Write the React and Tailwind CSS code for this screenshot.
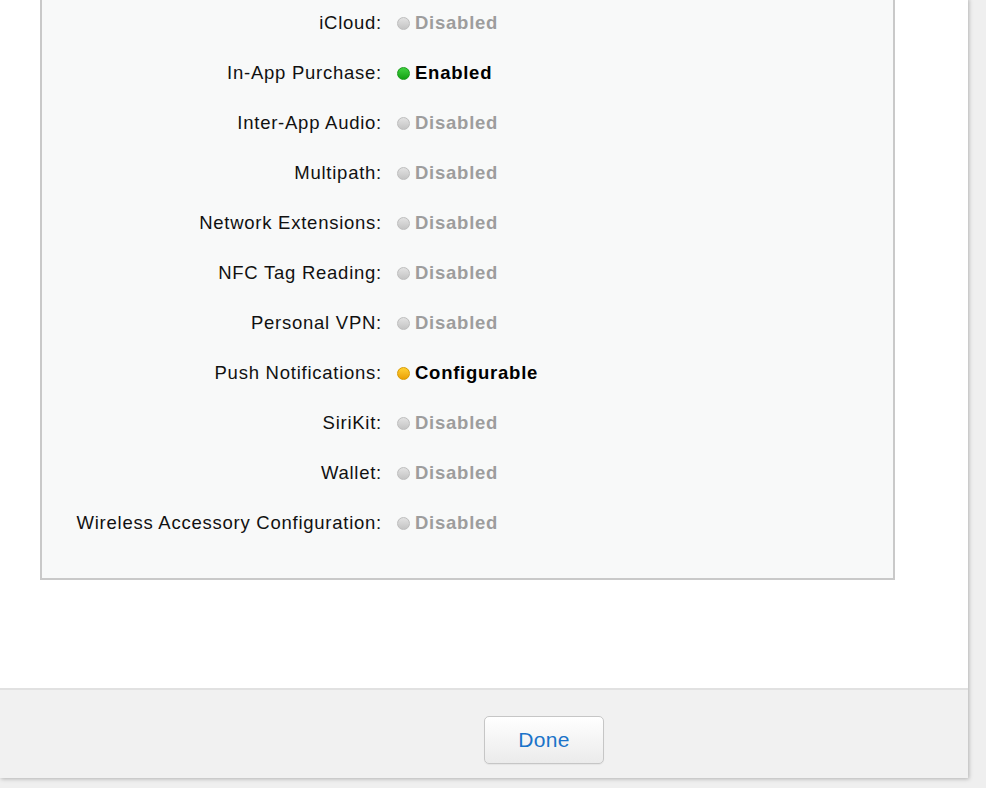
import React from "react";

const capabilities = [
  { name: "iCloud", status: "disabled" },
  { name: "In-App Purchase", status: "enabled" },
  { name: "Inter-App Audio", status: "disabled" },
  { name: "Multipath", status: "disabled" },
  { name: "Network Extensions", status: "disabled" },
  { name: "NFC Tag Reading", status: "disabled" },
  { name: "Personal VPN", status: "disabled" },
  { name: "Push Notifications", status: "configurable" },
  { name: "SiriKit", status: "disabled" },
  { name: "Wallet", status: "disabled" },
  { name: "Wireless Accessory Configuration", status: "disabled" },
];

const StatusDot = ({ status }) => {
  if (status === "enabled") {
    return (
      <span className="w-[13px] h-[13px] rounded-full bg-gradient-to-b from-[#3fd23f] to-[#10a010] border border-[#1c9a1c] shrink-0" />
    );
  }
  if (status === "configurable") {
    return (
      <span className="w-[13px] h-[13px] rounded-full bg-gradient-to-b from-[#ffd030] to-[#eaa000] border border-[#d89a00] shrink-0" />
    );
  }
  return (
    <span className="w-[13px] h-[13px] rounded-full bg-gradient-to-b from-[#e2e2e2] to-[#c4c4c4] border border-[#bdbdbd] shrink-0" />
  );
};

const StatusLabel = ({ status }) => {
  if (status === "enabled") return <span className="font-bold text-black">Enabled</span>;
  if (status === "configurable") return <span className="font-bold text-black">Configurable</span>;
  return <span className="font-bold text-[#9d9d9d]">Disabled</span>;
};

const App = () => {
  return (
    <div
      className="w-[986px] h-[788px] bg-[#efefef] overflow-hidden"
      style={{ fontFamily: '"Liberation Sans", Arial, sans-serif' }}
    >
      <div className="w-[968px] bg-white shadow-[1px_1px_4px_rgba(0,0,0,0.25)]">
        {/* Capabilities box */}
        <div className="pl-[40px] pr-[73px] h-[690px]">
          <div className="bg-[#f8f9f9] border-x-2 border-b-2 border-[#c9c9c9] pb-[30px]">
            <div className="-mt-[2px]">
              {capabilities.map((cap) => (
                <div key={cap.name} className="flex items-center h-[50px] text-[18.5px] tracking-[0.75px]">
                  <div className="w-[340px] text-right text-[#111]">{cap.name}:</div>
                  <div className="flex items-center ml-[15px] gap-[5px]">
                    <StatusDot status={cap.status} />
                    <StatusLabel status={cap.status} />
                  </div>
                </div>
              ))}
            </div>
          </div>
        </div>

        {/* Footer */}
        <div className="h-[90px] bg-[#f1f1f1] border-t-2 border-[#e1e1e1] pt-[26px] pl-[484px]">
          <button className="w-[120px] h-[48px] rounded-[5px] border border-[#c6c6c6] bg-gradient-to-b from-white to-[#ebebeb] text-[21px] tracking-[0.3px] text-[#1a73c9] shadow-[0_1px_1px_rgba(0,0,0,0.05)]">
            Done
          </button>
        </div>
      </div>
    </div>
  );
};

export default App;
